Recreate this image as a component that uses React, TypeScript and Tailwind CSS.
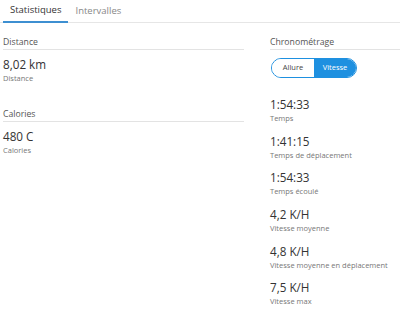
const stats = [
  { value: "1:54:33", label: "Temps" },
  { value: "1:41:15", label: "Temps de déplacement" },
  { value: "1:54:33", label: "Temps écoulé" },
  { value: "4,2 K/H", label: "Vitesse moyenne" },
  { value: "4,8 K/H", label: "Vitesse moyenne en déplacement" },
  { value: "7,5 K/H", label: "Vitesse max" },
];

const Header = ({ title }: { title: string }) => (
  <div className="h-[15px] border-b border-[#e3e3e3] text-[8.7px] leading-[15px] text-[#555]">{title}</div>
);

const Stat = ({ value, label }: { value: string; label: string }) => (
  <div className="flex flex-col">
    <p className="h-[16px] text-[11.7px] leading-[16px] text-[#333]">{value}</p>
    <p className="h-[12px] text-[7.5px] leading-[12px] text-[#777]">{label}</p>
  </div>
);

export default function App() {
  return (
    <div className="w-[400px] h-[310px] bg-white overflow-hidden font-['Open_Sans',sans-serif]">
      <div className="flex h-[23px] border-b border-[#e6e6e6] pl-[3px]">
        <button type="button" className="h-[23px] px-[7px] text-[9.5px] text-[#333] border-b-2 border-[#3d8fd1] -mb-[1px]">
          Statistiques
        </button>
        <button type="button" className="h-[22px] px-[7px] text-[9.5px] text-[#888]">
          Intervalles
        </button>
      </div>

      <div className="flex pt-[12px]">
        <div className="w-[241px] ml-[3px]">
          <Header title="Distance" />
          <div className="mt-[6px]">
            <Stat value="8,02 km" label="Distance" />
          </div>

          <div className="mt-[23px]">
            <Header title="Calories" />
          </div>
          <div className="mt-[6px]">
            <Stat value="480 C" label="Calories" />
          </div>
        </div>

        <div className="ml-[26px] flex-1">
          <Header title="Chronométrage" />
          <div className="mt-[8px] ml-[1px] flex w-[86px] h-[20px] rounded-full border border-[#1e90e0] overflow-hidden text-[7.5px]">
            <span className="flex-1 flex items-center justify-center text-[#444] bg-white">Allure</span>
            <span className="flex-1 flex items-center justify-center text-white bg-[#1e90e0]">Vitesse</span>
          </div>
          <div className="mt-[18px] flex flex-col gap-[8.7px]">
            {stats.map((s, i) => (
              <Stat key={i} value={s.value} label={s.label} />
            ))}
          </div>
        </div>
      </div>
    </div>
  );
}
